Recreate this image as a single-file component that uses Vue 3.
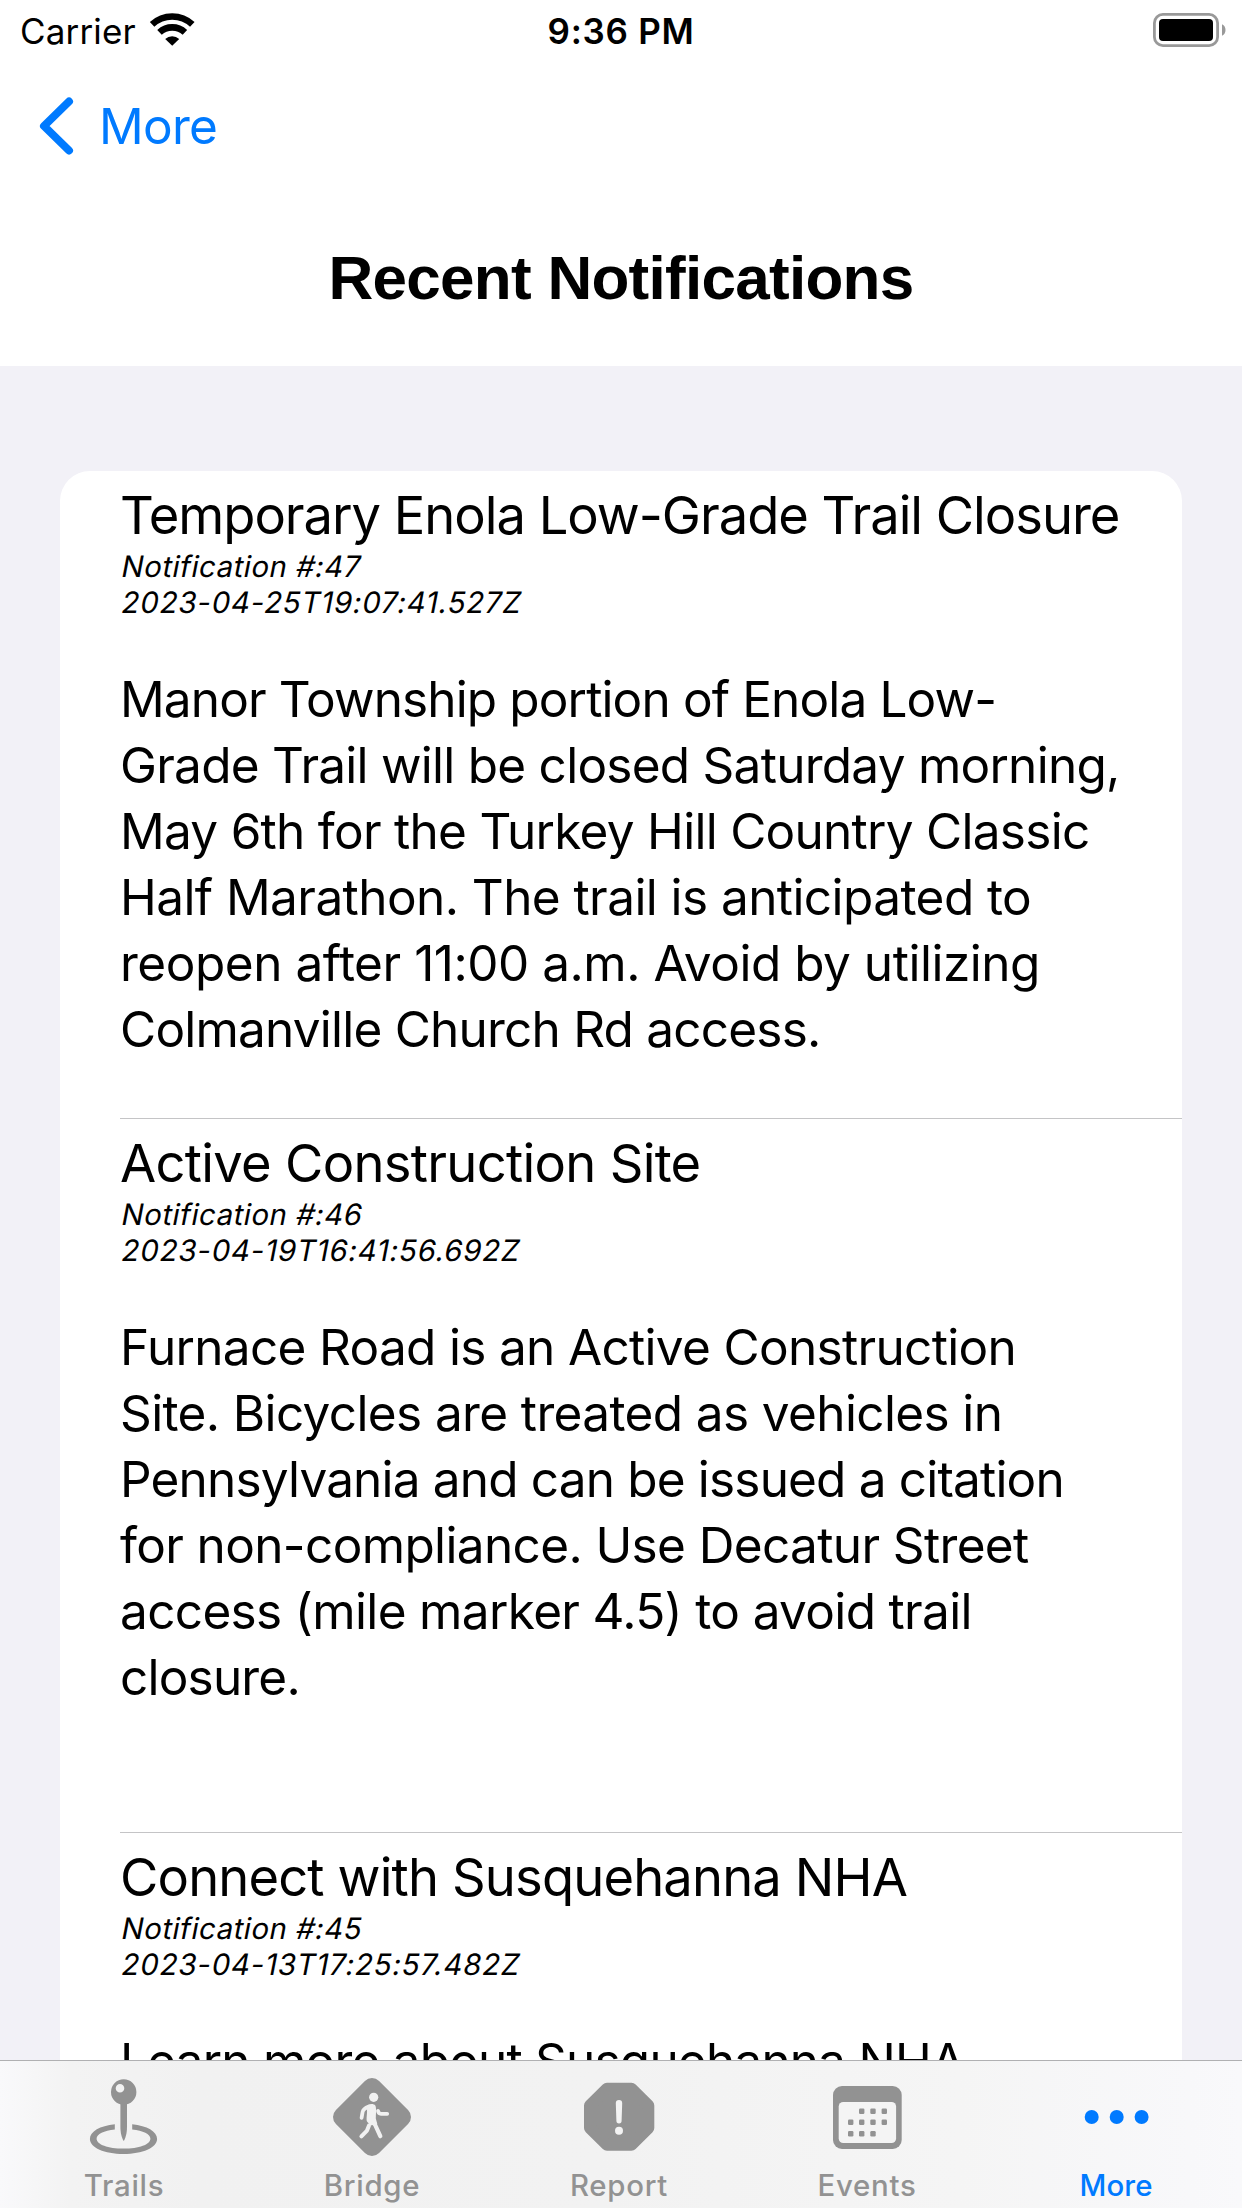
<script setup>
// Each text line carries its own tracking, in pixels.
const notifications = [
  {
    title: 'Temporary Enola Low-Grade Trail Closure',
    tracking: -1.03,
    id: 47,
    date: '2023-04-25T19:07:41.527Z',
    body: [
      ['Manor Township portion of Enola Low-', -0.86],
      ['Grade Trail will be closed Saturday morning,', -0.74],
      ['May 6th for the Turkey Hill Country Classic', -0.72],
      ['Half Marathon. The trail is anticipated to', -0.57],
      ['reopen after 11:00 a.m. Avoid by utilizing', -0.47],
      ['Colmanville Church Rd access.', -0.78],
    ],
  },
  {
    title: 'Active Construction Site',
    tracking: -0.7,
    id: 46,
    date: '2023-04-19T16:41:56.692Z',
    body: [
      ['Furnace Road is an Active Construction', -0.67],
      ['Site. Bicycles are treated as vehicles in', -0.62],
      ['Pennsylvania and can be issued a citation', -0.82],
      ['for non-compliance. Use Decatur Street', -0.63],
      ['access (mile marker 4.5) to avoid trail', -0.65],
      ['closure.', -0.8],
      ['', 0],
    ],
  },
  {
    title: 'Connect with Susquehanna NHA',
    tracking: -0.85,
    id: 45,
    date: '2023-04-13T17:25:57.482Z',
    body: [['Learn more about Susquehanna NHA', -0.79]],
  },
]

const calendarDots = [
  [39.7, 40.3], [51, 40.3], [62.3, 40.3],
  [28.7, 51.3], [39.7, 51.3], [51, 51.3], [62.3, 51.3],
  [28.7, 62.7], [39.7, 62.7], [51, 62.7],
]
</script>

<template>
  <div class="screen">
    <header class="header">
      <div class="status">
        <div class="carrier">
          <span class="carrier-name">Carrier</span>
          <svg class="wifi" width="48" height="38" viewBox="0 0 48 38">
            <g fill="none" stroke="#000" stroke-width="6.6">
              <path d="M4.1 14.4A29.5 29.5 0 0 1 44.3 14.4" />
              <path d="M11.5 22.4A18.6 18.6 0 0 1 36.9 22.4" />
            </g>
            <path d="M24.2 35.8L17.2 28.9A10.4 10.4 0 0 1 31.2 28.9Z" />
          </svg>
        </div>
        <span class="time">9:36 PM</span>
        <div class="battery-wrap">
          <svg width="76" height="38" viewBox="0 0 76 38">
            <rect x="1.4" y="4.4" width="63.2" height="31.2" rx="8.5" fill="none" stroke="#999" stroke-width="2.8" />
            <rect x="6" y="9" width="54" height="22" rx="4" />
            <path d="M69 14.3C73.7 16 73.7 24 69 25.7Z" fill="#999" />
          </svg>
        </div>
      </div>
      <nav class="nav">
        <svg class="chevron" width="36" height="60" viewBox="0 0 36 60">
          <path d="M31 5.5L6 30L31 54.5" fill="none" stroke="#007aff" stroke-width="8" stroke-linecap="round" stroke-linejoin="round" />
        </svg>
        <span class="back">More</span>
      </nav>
      <h1 class="heading"><span>Recent Notifications</span></h1>
    </header>

    <main class="content">
      <div class="card">
        <article v-for="n in notifications" :key="n.id" class="item">
          <h2 class="title"><span :style="{ letterSpacing: n.tracking + 'px' }">{{ n.title }}</span></h2>
          <p class="meta"><span>Notification #:{{ n.id }}</span></p>
          <p class="meta date"><span>{{ n.date }}</span></p>
          <div class="body">
            <p v-for="([text, tracking], i) in n.body" :key="i" class="line">
              <span :style="{ letterSpacing: tracking + 'px' }">{{ text }}</span>
            </p>
          </div>
        </article>
      </div>
    </main>

    <footer class="tabs">
      <div class="tab">
        <svg width="90" height="90" viewBox="0 0 90 90" fill="#929292">
          <path fill-rule="evenodd" d="M44.7 8.3a12.7 12.7 0 1 0 0 25.4a12.7 12.7 0 1 0 0-25.4ZM41 13a4.3 4.3 0 1 1 0 8.6a4.3 4.3 0 1 1 0-8.6Z" />
          <path d="M41.4 32H48V56C48 62 46.5 67.5 44.7 70C42.9 67.5 41.4 62 41.4 56Z" />
          <path d="M35.8 53.3C21 54.8 10.9 60.5 10.9 68C10.9 76.5 25.5 83 44.5 83S78.1 76.5 78.1 68C78.1 60.5 68 54.8 53.2 53.3V58.4C64 59.4 71.4 63 71.4 67.7C71.4 73.5 60 77.6 44.5 77.6S17.6 73.5 17.6 67.7C17.6 63 25 59.4 35.8 58.4Z" />
        </svg>
        <span class="label">Trails</span>
      </div>
      <div class="tab">
        <svg width="90" height="90" viewBox="0 0 90 90">
          <rect x="14.5" y="15.5" width="61" height="61" rx="10" fill="#929292" transform="rotate(45 45 46)" />
          <g fill="none" stroke="#f1f1f1" stroke-linecap="round" stroke-linejoin="round">
            <path d="M41.8 35.6C38 37 36 39 35.6 41L34.6 46.8" stroke-width="3.8" />
            <path d="M51 39.8C51.3 41.8 52.2 42.8 54 42.8H60.2" stroke-width="3.8" />
            <path d="M44.2 48.5L48.2 54L53.3 65.2" stroke-width="4.2" />
            <path d="M42 54.5L40 59.6L34.4 65.3" stroke-width="4" />
          </g>
          <circle cx="46.7" cy="26.3" r="4.6" fill="#f1f1f1" />
          <path d="M40.5 34.2C43 32.6 47 32.6 48.3 34.6C49.3 36.5 49.2 40 48.8 47.5L50.3 53L43.5 54.5L40 50.5C39 48 40.3 43 40 39Z" fill="#f1f1f1" />
        </svg>
        <span class="label">Bridge</span>
      </div>
      <div class="tab inner">
        <svg width="90" height="90" viewBox="0 0 90 90">
          <path d="M33 17.7H57.4L74.3 34.6V57L57.4 73.7H33L16 57V34.6Z" fill="#929292" stroke="#929292" stroke-width="12" stroke-linejoin="round" />
          <path d="M41.8 32.2a3.2 3.2 0 0 1 6.4 0L47.6 49.8a2.6 2.6 0 0 1-5.2 0Z" fill="#f3f3f3" />
          <circle cx="45" cy="59.7" r="4" fill="#f3f3f3" />
        </svg>
        <span class="label">Report</span>
      </div>
      <div class="tab inner">
        <svg width="90" height="90" viewBox="0 0 90 90">
          <rect x="11" y="15" width="68.7" height="63" rx="9" fill="#929292" />
          <rect x="16.7" y="31" width="57.4" height="41" rx="4.5" fill="#f4f4f4" />
          <rect v-for="([x, y], i) in calendarDots" :key="i" :x="x - 2.7" :y="y - 2.7" width="5.4" height="5.4" rx="1.2" fill="#929292" />
        </svg>
        <span class="label">Events</span>
      </div>
      <div class="tab active">
        <svg width="90" height="90" viewBox="0 0 90 90" fill="#007aff">
          <circle cx="20.7" cy="46" r="7" />
          <circle cx="45.7" cy="46" r="7" />
          <circle cx="70.6" cy="46" r="7" />
        </svg>
        <span class="label">More</span>
      </div>
    </footer>
  </div>
</template>

<style>
body {
  margin: 0;
}
</style>

<style scoped>
.screen {
  display: flex;
  flex-direction: column;
  width: 1242px;
  height: 2208px;
  overflow: hidden;
  background: #f2f1f7;
  color: #000;
  font-family: Inter, "Liberation Sans", sans-serif;
}
h1, h2, p {
  margin: 0;
  font-weight: 400;
  white-space: nowrap;
}
.header {
  flex: none;
  height: 366px;
  background: #fff;
}
.status {
  display: grid;
  grid-template-columns: 1fr auto 1fr;
  height: 60px;
}
.carrier {
  display: flex;
  padding-left: 20px;
}
.carrier-name {
  width: 128px;
  font-size: 35px;
  line-height: 62px;
  letter-spacing: 0.15px;
}
.wifi {
  margin-top: 10px;
}
.time {
  font-size: 35px;
  font-weight: 600;
  line-height: 62px;
  letter-spacing: 0.7px;
}
.battery-wrap {
  display: flex;
  justify-content: flex-end;
  padding: 10px 13px 0 0;
}
.nav {
  display: flex;
  align-items: center;
  height: 131px;
  padding-left: 38px;
}
.back {
  margin-left: 25px;
  font-size: 49.5px;
  letter-spacing: -0.7px;
  color: #007aff;
}
.heading {
  text-align: center;
  font-family: "Liberation Sans", Arial, sans-serif;
  font-size: 62px;
  font-weight: 700;
  line-height: 174px;
  letter-spacing: -0.72px;
}
.content {
  flex: 1;
  min-height: 0;
  overflow: hidden;
  padding: 105px 60px 0;
}
.card {
  background: #fff;
  border-radius: 30px 30px 0 0;
}
.item {
  padding: 11px 0 0 60px;
}
.item::after {
  content: "";
  display: block;
  height: 1px;
  margin-top: 56px;
  background: #c4c4c6;
}
.title {
  font-size: 52.5px;
  line-height: 66px;
}
.meta {
  height: 36px;
  font-size: 29.4px;
  line-height: 38px;
  letter-spacing: 0.5px;
}
.meta span {
  display: inline-block;
  transform: skewX(-11deg);
  transform-origin: 0 78%;
}
.date {
  letter-spacing: 0.8px;
}
.body {
  margin-top: 46px;
}
.line {
  height: 66px;
  font-size: 49.5px;
  line-height: 66px;
}
.tabs {
  flex: none;
  display: flex;
  box-sizing: border-box;
  height: 148px;
  border-top: 1px solid #b0b0b2;
  background: linear-gradient(90deg, #f9f9fb 0, #f3f3f3 70px, #f1f1f1 200px, #f2f2f2 600px, #f5f5f5 960px, #f8f8fa 1190px, #f9f9fb);
}
.tab {
  display: flex;
  flex-direction: column;
  align-items: center;
  box-sizing: border-box;
  width: 248px;
  padding-top: 10px;
  color: #929292;
}
.inner {
  padding-right: 2px;
}
.tab svg {
  flex: none;
}
.label {
  font-size: 29.4px;
  font-weight: 500;
  line-height: 50px;
  letter-spacing: 0.75px;
}
.active {
  color: #007aff;
}
.active .label {
  letter-spacing: 0.1px;
}
</style>
